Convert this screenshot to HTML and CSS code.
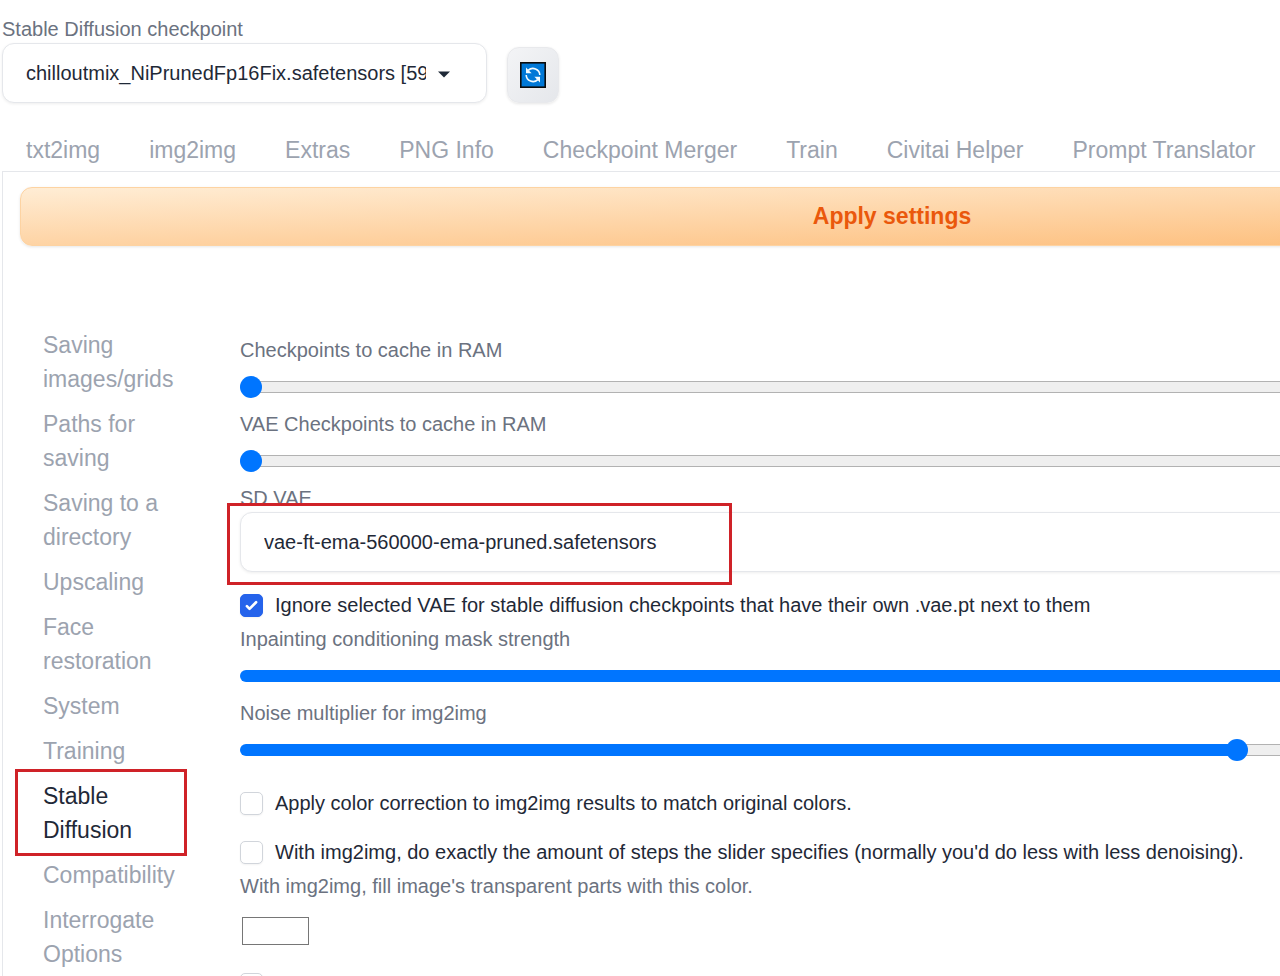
FILE: index.html
```html
<!DOCTYPE html>
<html lang="en">

<head>
    <meta charset="utf-8">
    <title>Stable Diffusion</title>
    <link rel="stylesheet" href="styles.css">
</head>

<body>
    <div class="app">
        <header class="quick">
            <div class="quick-model">
                <label class="label" for="checkpoint">Stable Diffusion checkpoint</label>
                <div class="dropdown">
                    <select id="checkpoint">
                        <option>chilloutmix_NiPrunedFp16Fix.safetensors [59ffe2243a]</option>
                    </select>
                    <svg class="caret" viewBox="0 0 12 7" aria-hidden="true">
                        <path d="M0 0.5h12L6 6.5z" fill="#1f2937" />
                    </svg>
                </div>
            </div>
            <button type="button" class="refresh" aria-label="Refresh">
                <svg viewBox="0 0 26 26" aria-hidden="true">
                    <rect width="26" height="26" fill="#0b0b0b" />
                    <rect x="1.6" y="1.6" width="22.8" height="22.8" fill="#0078d7" />
                    <g fill="none" stroke="#f3fbff" stroke-width="1.6">
                        <path d="M8.2 8.4A6.8 6.8 0 0 1 19.8 13" />
                        <path d="M17.8 17.6A6.8 6.8 0 0 1 6.2 13" />
                    </g>
                    <path d="M6 5.6v5.6h5.6z" fill="#f3fbff" />
                    <path d="M20 20.4v-5.6h-5.6z" fill="#f3fbff" />
                </svg>
            </button>
        </header>

        <nav class="tabs">
            <button type="button">txt2img</button>
            <button type="button">img2img</button>
            <button type="button">Extras</button>
            <button type="button">PNG Info</button>
            <button type="button">Checkpoint Merger</button>
            <button type="button">Train</button>
            <button type="button">Civitai Helper</button>
            <button type="button">Prompt Translator</button>
        </nav>

        <main class="panel">
            <button type="button" class="apply">Apply settings</button>

            <div class="settings">
                <nav class="side">
                    <button type="button">Saving images/grids</button>
                    <button type="button">Paths for saving</button>
                    <button type="button">Saving to a directory</button>
                    <button type="button">Upscaling</button>
                    <button type="button">Face restoration</button>
                    <button type="button">System</button>
                    <button type="button">Training</button>
                    <button type="button" class="on">Stable Diffusion<span class="mark mark-side"></span></button>
                    <button type="button">Compatibility</button>
                    <button type="button">Interrogate Options</button>
                </nav>

                <form class="fields">
                    <div class="slider">
                        <label class="label" for="ckpt-cache">Checkpoints to cache in RAM</label>
                        <input type="range" id="ckpt-cache" min="0" max="10" value="0" style="--fill: 0">
                    </div>
                    <div class="slider">
                        <label class="label" for="vae-cache">VAE Checkpoints to cache in RAM</label>
                        <input type="range" id="vae-cache" min="0" max="10" value="0" style="--fill: 0">
                    </div>
                    <div class="vae">
                        <label class="label" for="sd-vae">SD VAE</label>
                        <select id="sd-vae">
                            <option>vae-ft-ema-560000-ema-pruned.safetensors</option>
                        </select>
                        <span class="mark mark-vae"></span>
                    </div>
                    <label class="check"><input type="checkbox" checked>Ignore selected VAE for stable diffusion checkpoints that have their own .vae.pt next to them</label>
                    <div class="slider">
                        <label class="label" for="mask">Inpainting conditioning mask strength</label>
                        <input type="range" id="mask" min="0" max="1" step="0.01" value="1" style="--fill: 1">
                    </div>
                    <div class="slider">
                        <label class="label" for="noise">Noise multiplier for img2img</label>
                        <input type="range" id="noise" min="0" max="1.5" step="0.01" value="1" style="--fill: 0.6667">
                    </div>
                    <label class="check check-first"><input type="checkbox">Apply color correction to img2img results to match original colors.</label>
                    <label class="check"><input type="checkbox">With img2img, do exactly the amount of steps the slider specifies (normally you'd do less with less denoising).</label>
                    <div class="color">
                        <label class="label" for="fill-color">With img2img, fill image's transparent parts with this color.</label>
                        <input type="color" id="fill-color" value="#ffffff">
                    </div>
                    <div class="check"><input type="checkbox" aria-label="Enable quantization in K samplers"></div>
                </form>
            </div>
        </main>
    </div>
</body>

</html>
```
FILE: styles.css
```css
* {
    box-sizing: border-box;
    margin: 0;
    padding: 0;
}

html {
    overflow-x: hidden;
    scrollbar-width: none;
}

body {
    background: #fff;
    color: #1f2937;
    font-family: "Liberation Sans", Arial, sans-serif;
    font-size: 20px;
    line-height: 27px;
    overflow-x: hidden;
    scrollbar-width: none;
}

button,
select,
input {
    font: inherit;
    color: inherit;
}

button {
    border: 0;
    background: none;
    cursor: pointer;
}

/* the settings page is wider than the window */
.app {
    width: calc(100% + 504px);
    padding: 16px 2px 0;
}

.label {
    display: block;
    color: #6b7280;
}

select {
    appearance: none;
    display: block;
    width: 100%;
    height: 60px;
    padding: 0 60px 0 23px;
    border: 1px solid #e5e7eb;
    border-radius: 12px;
    background: #fff;
    box-shadow: 0 1px 3px rgba(0, 0, 0, 0.07);
}

.quick {
    display: flex;
    align-items: flex-end;
    gap: 20px;
}

.quick-model {
    width: 485px;
}

.dropdown {
    position: relative;
}

.caret {
    position: absolute;
    right: 37px;
    top: 28px;
    width: 12px;
    height: 7px;
}

.refresh {
    display: flex;
    align-items: center;
    justify-content: center;
    width: 52px;
    height: 56px;
    border: 1px solid #e8e9ec;
    border-radius: 12px;
    background: linear-gradient(to bottom right, #f3f4f6, #e5e7eb);
    box-shadow: 0 1px 3px rgba(0, 0, 0, 0.1);
}

.refresh svg {
    width: 26px;
    height: 26px;
}

.tabs {
    display: flex;
    gap: 1px;
    margin-top: 24px;
}

.tabs button {
    padding: 6px 24px 4px;
    color: #9ca3af;
    font-size: 23px;
    line-height: 34px;
    white-space: nowrap;
}

.panel {
    border: 1px solid #e5e7eb;
    border-bottom: 0;
    padding: 15px 17px 0;
}

.apply {
    display: block;
    width: 100%;
    height: 59px;
    border: 1px solid #fdd3a2;
    border-radius: 12px;
    background: linear-gradient(to bottom right, #ffedd5, #fdba74);
    box-shadow: 0 1px 3px rgba(0, 0, 0, 0.1);
    color: #ea580c;
    font-size: 23px;
    font-weight: bold;
}

.settings {
    display: flex;
    gap: 47px;
    padding: 82px 23px 0;
}

.side {
    display: flex;
    flex-direction: column;
    gap: 11px;
    flex: none;
    width: 150px;
}

.side button {
    position: relative;
    color: #9ca3af;
    font-size: 23px;
    line-height: 34px;
    text-align: left;
}

.side .on {
    color: #1f2937;
}

.mark {
    position: absolute;
    border: 3px solid #cf2228;
    pointer-events: none;
}

.mark-side {
    left: -28px;
    top: -10px;
    width: 172px;
    height: 87px;
}

.mark-vae {
    left: -13px;
    top: 18px;
    width: 505px;
    height: 82px;
}

.fields {
    flex: 1;
    padding-top: 9px;
}

.slider {
    padding-bottom: 13px;
}

input[type="range"] {
    appearance: none;
    display: block;
    width: 100%;
    height: 22px;
    margin-top: 12px;
    background: none;
}

input[type="range"]::-webkit-slider-runnable-track {
    height: 12px;
    border-radius: 6px;
    background:
        linear-gradient(#0075ff, #0075ff) 0 0 / calc(var(--fill) * 100%) 100% no-repeat,
        linear-gradient(#b2b2b2 1px, #efefef 1px, #efefef 11px, #b2b2b2 11px);
}

input[type="range"]::-webkit-slider-thumb {
    appearance: none;
    width: 22px;
    height: 22px;
    margin-top: -5px;
    border-radius: 50%;
    background: #0075ff;
}

.vae {
    position: relative;
    padding-bottom: 20px;
}

.check {
    display: flex;
    align-items: center;
    gap: 12px;
    margin-bottom: 7px;
}

.check-first {
    margin-top: 16px;
    margin-bottom: 22px;
}

input[type="checkbox"] {
    appearance: none;
    width: 23px;
    height: 23px;
    border: 1px solid #d1d5db;
    border-radius: 5px;
    background: #fff;
    box-shadow: 0 1px 2px rgba(0, 0, 0, 0.05);
}

input[type="checkbox"]:checked {
    border-color: #2563eb;
    background: #2563eb url("data:image/svg+xml,%3Csvg viewBox='0 0 16 16' fill='white' xmlns='http://www.w3.org/2000/svg'%3E%3Cpath d='M12.207 4.793a1 1 0 010 1.414l-5 5a1 1 0 01-1.414 0l-2-2a1 1 0 011.414-1.414L6.5 9.086l4.293-4.293a1 1 0 011.414 0z'/%3E%3C/svg%3E") center / 100% no-repeat;
}

.color {
    padding-bottom: 28px;
}

input[type="color"] {
    appearance: none;
    display: block;
    width: 67px;
    height: 28px;
    margin: 17px 2px 0;
    border: 1px solid #767676;
    background: #fff;
}

input[type="color"]::-webkit-color-swatch-wrapper {
    padding: 0;
}

input[type="color"]::-webkit-color-swatch {
    border: 0;
}
```
